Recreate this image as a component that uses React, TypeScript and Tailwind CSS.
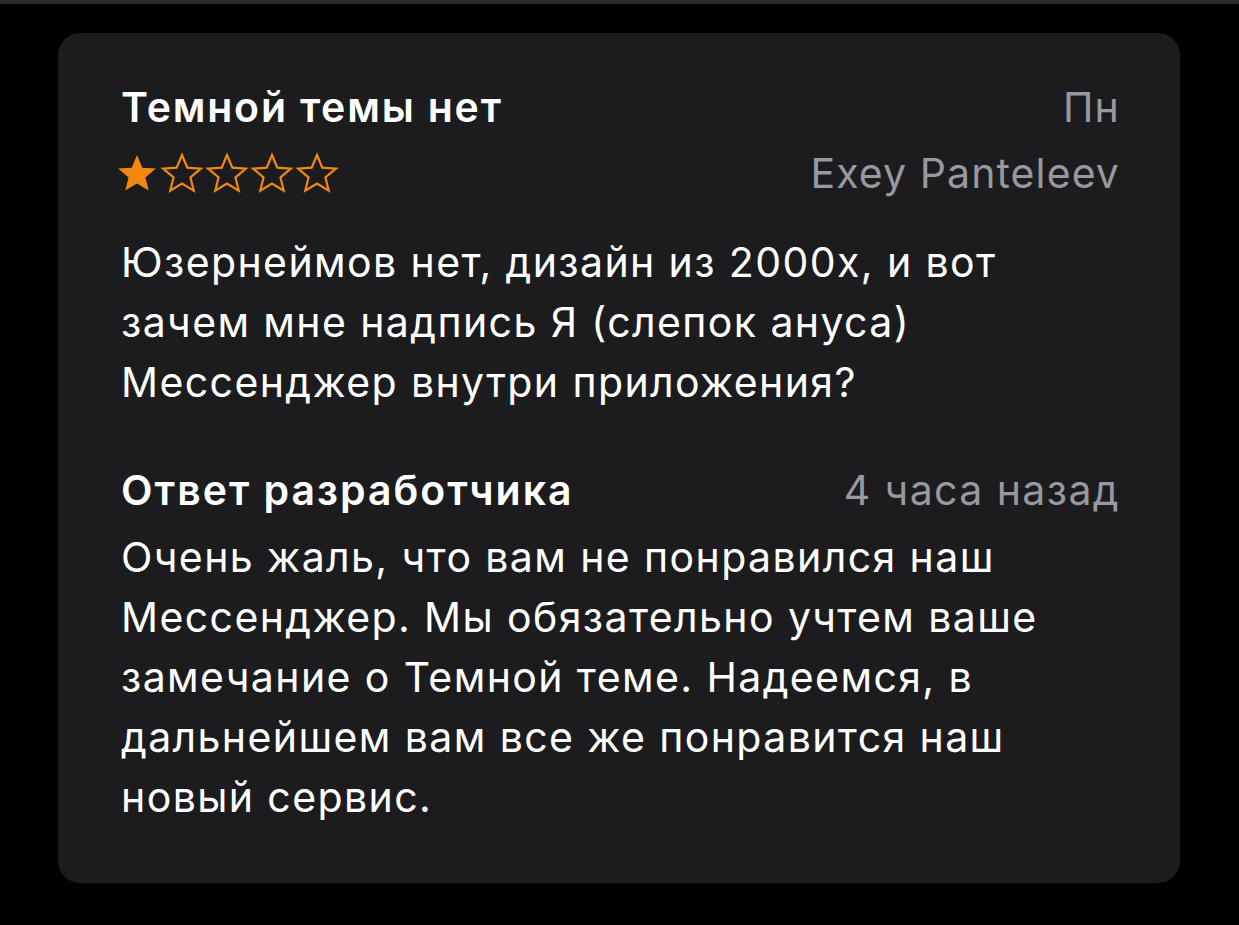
const Star = ({ filled }: { filled: boolean }) => (
  <svg width="44" height="44" viewBox="0 0 24 24" className="shrink-0">
    <polygon
      points="12,2.2 14.9,9.1 22.3,9.6 16.6,14.4 18.4,21.6 12,17.7 5.6,21.6 7.4,14.4 1.7,9.6 9.1,9.1"
      fill={filled ? '#f2880f' : 'none'}
      stroke="#f2880f"
      strokeWidth={filled ? 0 : 1.2}
      strokeLinejoin="miter"
    />
  </svg>
)

const App: React.FC = () => {
  return (
    <div className="min-h-[925px] w-full bg-black font-['Inter','Liberation_Sans',sans-serif]">
      <div className="h-[4px] w-full bg-[#2a2a2a]"></div>

      <div className="ml-[58px] mt-[29px] h-[850px] w-[1122px] rounded-[22px] bg-[#1c1c1e] pl-[63px] pr-[60px] pt-[50px]">
        <div className="flex flex-row items-center justify-between">
          <h2 className="text-[41px] font-semibold leading-[48px] tracking-[1.8px] text-white">Темной темы нет</h2>
          <span className="text-[41px] leading-[48px] tracking-[1.2px] text-[#98989f]">Пн</span>
        </div>

        <div className="mt-[18px] flex flex-row items-center justify-between">
          <div className="-ml-[6px] flex flex-row gap-[1px]">
            <Star filled />
            <Star filled={false} />
            <Star filled={false} />
            <Star filled={false} />
            <Star filled={false} />
          </div>
          <span className="text-[41px] leading-[48px] tracking-[1.1px] text-[#98989f]">Exey Panteleev</span>
        </div>

        <p className="mt-[35px] text-[41px] leading-[60px] tracking-[1.4px] text-white">
          Юзернеймов нет, дизайн из 2000х, и вот
          <br />
          зачем мне надпись Я (слепок ануса)
          <br />
          Мессенджер внутри приложения?
        </p>

        <div className="mt-[54px] flex flex-row items-center justify-between">
          <h3 className="text-[41px] font-semibold leading-[48px] tracking-[2px] text-white">Ответ разработчика</h3>
          <span className="text-[41px] leading-[48px] tracking-[1.4px] text-[#98989f]">4 часа назад</span>
        </div>

        <p className="mt-[13px] text-[41px] leading-[60px] tracking-[1.4px] text-white">
          Очень жаль, что вам не понравился наш
          <br />
          Мессенджер. Мы обязательно учтем ваше
          <br />
          замечание о Темной теме. Надеемся, в
          <br />
          дальнейшем вам все же понравится наш
          <br />
          новый сервис.
        </p>
      </div>
    </div>
  )
}

export default App
